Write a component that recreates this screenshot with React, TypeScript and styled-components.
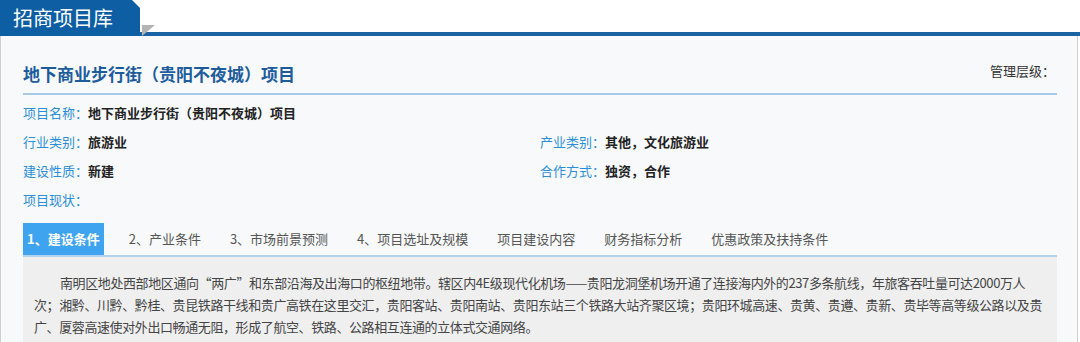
import React from 'react';
import styled, { createGlobalStyle } from 'styled-components';

const GlobalStyle = createGlobalStyle`
  html, body {
    margin: 0;
    padding: 0;
    background: #fff;
    font-family: "Noto Sans CJK SC", "Liberation Sans", sans-serif;
  }
  * { box-sizing: border-box; }
`;

const Page = styled.div`
  width: 1080px;
  height: 342px;
  overflow: hidden;
`;

const Header = styled.div`
  display: flex;
  height: 36px;
`;

const HeaderTab = styled.div`
  width: 140px;
  height: 36px;
  background: #0d5ea2;
  color: #fff;
  font-size: 20px;
  line-height: 36px;
  padding-left: 13px;
  clip-path: polygon(0 0, 132px 0, 140px 8px, 140px 36px, 0 36px);
`;

const HeaderRest = styled.div`
  flex: 1;
  position: relative;
  border-bottom: 4px solid #1b64a3;
  &::before {
    content: '';
    position: absolute;
    left: 2px;
    top: 25px;
    width: 0;
    height: 0;
    border-top: 11px solid #b4b4b4;
    border-right: 13px solid transparent;
  }
`;

const Panel = styled.div`
  width: 1078px;
  background: #f8f9fb;
  border-left: 1px solid #cfcfcf;
  border-right: 1px solid #cfcfcf;
  padding: 26px 20px 0 22px;
`;

const TitleRow = styled.div`
  display: flex;
  justify-content: space-between;
  align-items: flex-start;
  padding-bottom: 7px;
  border-bottom: 2px solid #a8c9e8;
`;

const Title = styled.h1`
  margin: 0;
  font-size: 17px;
  line-height: 24px;
  font-weight: bold;
  color: #1d5c9b;
`;

const Level = styled.span`
  font-size: 13px;
  line-height: 18px;
  color: #333;
  margin-right: 2px;
`;

const Fields = styled.div`
  display: grid;
  grid-template-columns: 517px 1fr;
  margin-top: 3px;
`;

const Field = styled.div<{ $wide?: boolean }>`
  grid-column: ${p => (p.$wide ? '1 / span 2' : 'auto')};
  font-size: 13px;
  line-height: 29px;
  height: 29px;
`;

const Label = styled.span`
  color: #2b8ed8;
`;

const Value = styled.span`
  color: #222;
  font-weight: bold;
`;

const Tabs = styled.div`
  display: flex;
  margin-top: 9px;
  border-bottom: 2px solid #b3d2ec;
  height: 34px;
  gap: 21px;
`;

const Tab = styled.div<{ $active?: boolean }>`
  height: 32px;
  line-height: 32px;
  padding: 0 4px;
  font-size: 13px;
  color: ${p => (p.$active ? '#fff' : '#555')};
  background: ${p => (p.$active ? '#3fa4f0' : 'transparent')};
  font-weight: ${p => (p.$active ? 'bold' : 'normal')};
`;

const Content = styled.div`
  background: #efeff0;
  padding: 15px 8px 20px 11px;
  font-size: 13px;
  line-height: 22px;
  letter-spacing: -0.4px;
  color: #444;
  text-indent: 2em;
  min-height: 100px;
`;

const tabs = [
  '1、建设条件',
  '2、产业条件',
  '3、市场前景预测',
  '4、项目选址及规模',
  '项目建设内容',
  '财务指标分析',
  '优惠政策及扶持条件',
];

export default function App() {
  return (
    <Page>
      <GlobalStyle />
      <Header>
        <HeaderTab>招商项目库</HeaderTab>
        <HeaderRest />
      </Header>
      <Panel>
        <TitleRow>
          <Title>地下商业步行街（贵阳不夜城）项目</Title>
          <Level>管理层级：</Level>
        </TitleRow>
        <Fields>
          <Field $wide>
            <Label>项目名称：</Label>
            <Value>地下商业步行街（贵阳不夜城）项目</Value>
          </Field>
          <Field>
            <Label>行业类别：</Label>
            <Value>旅游业</Value>
          </Field>
          <Field>
            <Label>产业类别：</Label>
            <Value>其他，文化旅游业</Value>
          </Field>
          <Field>
            <Label>建设性质：</Label>
            <Value>新建</Value>
          </Field>
          <Field>
            <Label>合作方式：</Label>
            <Value>独资，合作</Value>
          </Field>
          <Field $wide>
            <Label>项目现状：</Label>
          </Field>
        </Fields>
        <Tabs>
          {tabs.map((t, i) => (
            <Tab key={t} $active={i === 0}>
              {t}
            </Tab>
          ))}
        </Tabs>
        <Content>
          南明区地处西部地区通向“两广”和东部沿海及出海口的枢纽地带。辖区内4E级现代化机场——贵阳龙洞堡机场开通了连接海内外的237多条航线，年旅客吞吐量可达2000万人次；湘黔、川黔、黔桂、贵昆铁路干线和贵广高铁在这里交汇，贵阳客站、贵阳南站、贵阳东站三个铁路大站齐聚区境；贵阳环城高速、贵黄、贵遵、贵新、贵毕等高等级公路以及贵广、厦蓉高速使对外出口畅通无阻，形成了航空、铁路、公路相互连通的立体式交通网络。
        </Content>
      </Panel>
    </Page>
  );
}
